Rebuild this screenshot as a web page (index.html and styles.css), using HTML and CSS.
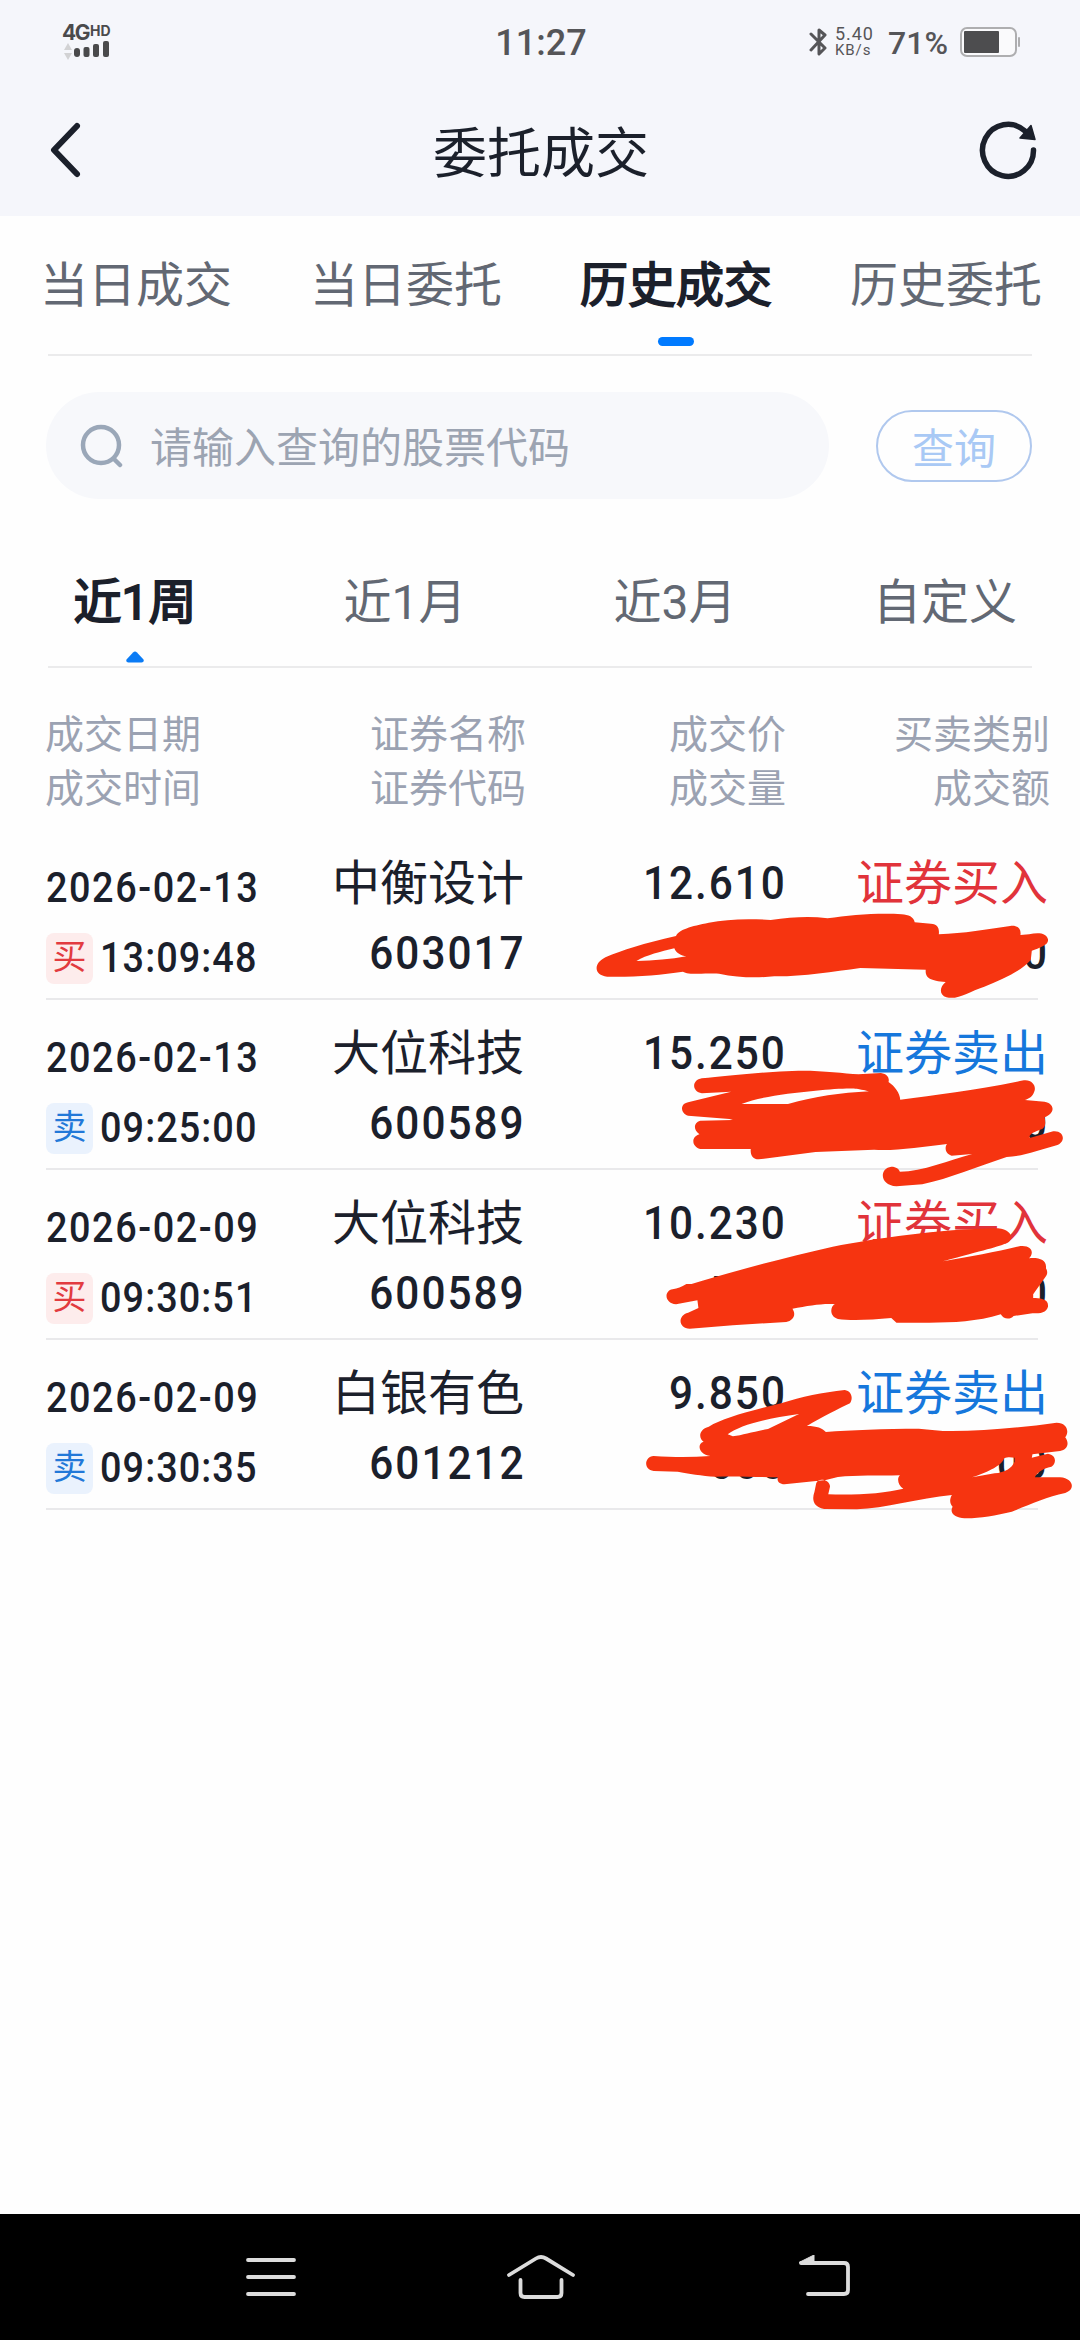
FILE: index.html
```html
<!DOCTYPE html>
<html lang="zh-CN">
<head>
<meta charset="utf-8">
<title>委托成交</title>
<link rel="stylesheet" href="styles.css">
</head>
<body>
<div class="screen">
  <header class="top">
    <div class="status">
      <div class="signal">
        <div class="net">4G<sup>HD</sup></div>
        <svg width="48" height="20" viewBox="0 0 48 20">
          <path d="M6 2l4 7H2zM6 19l4-7H2z" fill="#d2d2d4"/>
          <g fill="#4a4a4c"><rect x="12" y="7" width="6" height="9" rx="3"/><rect x="21.500" y="6" width="6" height="10" rx="2"/><rect x="31" y="3" width="6" height="13" rx="2"/><rect x="41" y="0" width="6" height="16" rx="2"/></g>
        </svg>
      </div>
      <div class="clock">11:27</div>
      <div class="status-right">
        <svg width="18" height="30" viewBox="0 0 18 30" fill="none" stroke="#555558" stroke-width="3" stroke-linejoin="round" stroke-linecap="round"><path d="M2 7l14 14-6 6V3l6 5L2 23"/></svg>
        <div class="speed"><span>5.40</span><span>KB/s</span></div>
        <div class="percent">71%</div>
        <svg class="battery" width="61" height="30" viewBox="0 0 61 30"><rect x="1" y="1" width="55" height="28" rx="6" fill="#fafafc" stroke="#aeaeb0" stroke-width="2"/><rect x="4" y="4" width="35" height="22" rx="1" fill="#4d4d4f"/><rect x="58" y="10" width="2" height="10" rx="1" fill="#aeaeb0"/></svg>
      </div>
    </div>
    <div class="titlebar">
      <svg width="40" height="60" viewBox="0 0 40 60" fill="none" stroke="#1b202b" stroke-width="6" stroke-linecap="round" stroke-linejoin="round"><path d="M31 6L8 30l23 24"/></svg>
      <h1>委托成交</h1>
      <svg width="60" height="60" viewBox="0 0 60 60"><path d="M55.500 30A25.500 26 0 1 1 47 11" fill="none" stroke="#1b202b" stroke-width="5.500" stroke-linecap="round"/><path d="M53 5.500L57 19.500 42 18z" fill="#1b202b" stroke="#1b202b" stroke-width="1.500" stroke-linejoin="round"/></svg>
    </div>
  </header>

  <nav class="tabs">
    <a>当日成交</a><a>当日委托</a><a class="on">历史成交</a><a>历史委托</a>
  </nav>

  <div class="search">
    <div class="field">
      <svg width="44" height="44" viewBox="0 0 44 44" fill="none" stroke="#9aa7b8" stroke-width="4.500" stroke-linecap="round"><circle cx="22" cy="21" r="18"/><path d="M35 35l6 6"/></svg>
      <span>请输入查询的股票代码</span>
    </div>
    <button class="query">查询</button>
  </div>

  <nav class="periods">
    <a class="on">近1周<svg width="18" height="12" viewBox="0 0 18 12"><path d="M7 1.500q2-2 4 0l6.500 7q1 3-2 3h-13q-3 0-2-3z" fill="#0a7bf5"/></svg></a><a>近1月</a><a>近3月</a><a>自定义</a>
  </nav>

  <div class="cols head">
    <div>成交日期<br>成交时间</div><div>证券名称<br>证券代码</div><div>成交价<br>成交量</div><div>买卖类别<br>成交额</div>
  </div>

  <main>
    <div class="cols row buy">
      <div><p class="date"><span>2026-02-13</span></p><p class="time"><i>买</i><span>13:09:48</span></p></div>
      <div><p>中衡设计</p><p class="num"><span>603017</span></p></div>
      <div><p class="num"><span>12.610</span></p></div>
      <div><p class="type">证券买入</p><p class="num"><span>0</span></p></div>
    </div>
    <div class="cols row sell">
      <div><p class="date"><span>2026-02-13</span></p><p class="time"><i>卖</i><span>09:25:00</span></p></div>
      <div><p>大位科技</p><p class="num"><span>600589</span></p></div>
      <div><p class="num"><span>15.250</span></p></div>
      <div><p class="type">证券卖出</p><p class="num"><span>0</span></p></div>
    </div>
    <div class="cols row buy">
      <div><p class="date"><span>2026-02-09</span></p><p class="time"><i>买</i><span>09:30:51</span></p></div>
      <div><p>大位科技</p><p class="num"><span>600589</span></p></div>
      <div><p class="num"><span>10.230</span></p><p class="num lead"><span>5</span></p></div>
      <div><p class="type">证券买入</p><p class="num"><span>0</span></p></div>
    </div>
    <div class="cols row sell">
      <div><p class="date"><span>2026-02-09</span></p><p class="time"><i>卖</i><span>09:30:35</span></p></div>
      <div><p>白银有色</p><p class="num"><span>601212</span></p></div>
      <div><p class="num"><span>9.850</span></p><p class="num"><span>600</span></p></div>
      <div><p class="type">证券卖出</p><p class="num"><span>00</span></p></div>
    </div>
  </main>

  <svg class="marks" width="540" height="720" viewBox="540 840 540 720" fill="#f63410" fill-rule="evenodd">
    <g transform="translate(540 680) scale(.3444 .3333)"><path d="M395 768C300 790 240 810 190 832C155 850 155 885 195 890C270 892 350 885 415 875C430 885 470 880 520 881C580 895 640 893 680 889C760 890 850 875 930 864L1120 869C1118 892 1130 902 1178 906C1160 920 1158 945 1180 952C1215 960 1245 935 1290 920C1350 895 1400 870 1425 840L1428 812C1450 803 1478 795 1475 778C1470 760 1450 757 1420 763L1395 765C1398 745 1385 735 1365 738C1300 748 1230 760 1158 763C1160 745 1155 732 1135 731L1088 727C1085 710 1070 705 1050 703C980 698 900 706 835 715C780 708 730 712 670 720C600 715 540 718 490 728C440 738 400 750 395 768ZM280 843C310 825 350 815 390 805C395 820 410 827 425 829C380 838 330 842 280 843Z"/></g>
    <g transform="translate(540 1000) scale(.3444 .3333)"><path d="M470 235C540 228 650 215 750 212C820 211 880 220 925 223L990 219C1010 222 1015 235 1012 246C1030 258 1045 280 1046 299C1150 285 1270 270 1405 241C1430 238 1442 260 1435 275C1430 290 1420 295 1408 300L1465 305C1495 310 1497 340 1465 352C1470 370 1468 385 1450 390C1425 400 1420 405 1422 414L1490 394C1520 390 1530 425 1500 436C1450 450 1400 470 1355 471C1270 500 1190 535 1110 553L1035 559C985 555 985 505 1020 500C1035 500 1042 507 1045 515C1110 515 1190 480 1255 462L1195 467C1175 460 1175 440 1182 432C1110 440 1020 455 970 449L800 456L635 478C618 478 610 465 612 447L465 447C440 440 438 410 463 403C445 390 445 368 465 362L560 360L550 357L430 347C408 340 405 312 430 307L555 275L470 280C440 275 440 240 470 235ZM585 312C640 290 720 280 800 272C850 266 900 264 920 266C940 270 950 272 957 274C870 278 800 290 720 312Z"/></g>
    <g transform="translate(540 1160) scale(.3444 .3333)">
      <path d="M385 388C400 385 410 382 425 372L440 372C560 335 700 295 850 260C980 235 1150 208 1330 205C1370 210 1375 235 1360 247C1330 262 1290 270 1170 304C1250 290 1330 275 1395 258C1430 255 1435 280 1420 295C1450 292 1472 300 1469 325C1475 335 1473 345 1468 350L1432 403L1432 414C1450 415 1478 415 1475 440C1470 458 1455 460 1430 460L1375 468C1365 480 1345 478 1338 463C1270 485 1200 488 1130 488L1035 488L1020 474C960 480 900 482 865 477C840 470 842 440 856 433C820 430 780 438 733 446C745 465 735 482 715 486L560 496L435 506C400 505 400 465 430 458L460 444L457 421L395 433C360 430 360 392 385 388Z"/>
      <path d="M490 800C530 775 600 755 700 730C760 710 820 697 885 690C905 693 910 715 900 730C870 745 820 770 775 798C805 798 820 805 830 816C900 810 1000 806 1100 806L1170 813C1270 815 1380 805 1500 788C1530 788 1538 815 1525 832C1538 850 1532 870 1510 873L1430 883L1428 893L1475 881C1500 885 1500 910 1485 920C1460 925 1440 940 1437 952L1510 952C1550 955 1555 990 1525 999C1470 1010 1420 1035 1370 1055C1320 1068 1260 1077 1225 1074C1198 1070 1190 1055 1198 1040C1188 1030 1190 1015 1196 1005C1100 1015 1000 1045 920 1048L825 1047C790 1040 790 1015 797 995L802 970C808 950 843 960 842 980L837 1003C920 1006 1000 1000 1055 986C1040 978 1035 955 1045 946C980 948 920 945 865 951L830 960L710 973C695 972 688 965 690 952C640 952 580 948 510 950C470 948 430 940 400 935L330 933C300 930 302 890 330 888C390 892 440 892 495 888C460 885 455 850 475 845C460 835 460 808 490 800ZM545 823C580 795 660 775 752 762L662 807C620 815 590 825 560 829ZM1255 952C1290 940 1340 920 1348 895C1360 890 1370 893 1378 893L1378 905C1370 925 1350 937 1320 940Z"/>
    </g>
  </svg>

  <footer class="sysnav">
    <svg width="54" height="44" viewBox="0 0 54 44"><path d="M4 5h46M4 22h46M4 39h46"/></svg>
    <svg width="72" height="46" viewBox="0 0 72 46"><path d="M4 21L31 4.500q5-3 10 0L68 21M15.500 26v13q0 4 4 4h33q4 0 4-4V26"/></svg>
    <svg width="54" height="44" viewBox="0 0 54 44"><path d="M3 8h43q4 0 4 4v23q0 4-4 4H10"/><path class="tip" d="M2 7L16 0v8H2z"/></svg>
  </footer>
</div>
</body>
</html>
```
FILE: styles.css
```css
* { box-sizing: border-box; margin: 0; padding: 0; }
body { background: #fefefe; font-family: Roboto, "Noto Sans CJK SC", sans-serif; color: #1b202b; }
svg { display: block; flex: none; }
.screen { position: relative; width: 1080px; height: 2340px; display: flex; flex-direction: column; overflow: hidden; }

.top { height: 216px; background: #f5f6fb; }
.status { height: 84px; display: grid; grid-template-columns: 1fr auto 1fr; align-items: center; padding: 0 60px 0 62px; color: #555558; }
.signal { color: #4a4a4c; }
.net { display: flex; align-items: flex-start; height: 17px; font: 700 21px/18px Inter, sans-serif; letter-spacing: -1.5px; }
.net sup { font-size: 14px; line-height: 13px; letter-spacing: 0; margin-left: 1px; }
.clock { font-size: 36px; font-weight: 500; line-height: 40px; padding-top: 2px; }
.status-right { display: flex; align-items: center; justify-content: flex-end; }
.speed { display: flex; flex-direction: column; margin-left: 8px; width: 53px; font-size: 18px; line-height: 17px; letter-spacing: .9px; }
.speed span + span { font-size: 15px; }
.percent { font-size: 32px; font-weight: 500; line-height: 36px; margin-right: 12px; padding-top: 2px; }
.battery { margin-right: -1px; }
.titlebar { height: 132px; display: flex; justify-content: space-between; padding: 36px 42px 0 46px; }
h1 { font-size: 54px; line-height: 60px; font-weight: 400; padding: 5px 0 0 18px; }

.tabs, .periods { display: grid; grid-template-columns: repeat(4, 270px); text-align: center; font-size: 48px; color: #626873; }
.tabs { height: 140px; line-height: 70px; padding: 35px 0 0 1px; background: linear-gradient(#ebebec, #ebebec) 48px 138px / 984px 2px no-repeat; }
.on { color: #1b202b; -webkit-text-stroke: 1.8px #1b202b; }
.tabs .on::after { content: ""; display: block; width: 36px; height: 9px; margin: 16px auto 0; border-radius: 5px; background: #007aff; }

.search { height: 180px; padding: 36px 48px 0 46px; display: flex; justify-content: space-between; }
.field { width: 783px; height: 107px; border-radius: 54px; background: #f7f8fb; display: flex; align-items: center; padding-left: 33px; font-size: 42px; color: #9ca4b2; }
.field span { margin-left: 27px; padding-top: 6px; line-height: 60px; }
.query { width: 156px; height: 72px; margin-top: 18px; border: 2px solid #b0c8ee; border-radius: 36px; background: none; font: 42px/66px "Noto Sans CJK SC", sans-serif; color: #a9c9f5; }

.periods { height: 132px; padding-top: 32px; line-height: 70px; background: linear-gradient(#ebebec, #ebebec) 48px 130px / 984px 2px no-repeat; }
.periods svg { margin: 13px auto 0; }

.cols { display: grid; grid-template-columns: 240px 240px 260px 262px; margin-left: 46px; width: 1002px; }
.cols > div + div { text-align: right; }
.head { height: 162px; padding-top: 40px; font-size: 39px; line-height: 54px; color: #9ba2b2; }
.head > div:first-child { margin-left: -1px; }
.head > div:nth-child(4) { margin-right: -2px; }
.row { height: 170px; padding-top: 19px; font-size: 48px; background: linear-gradient(#e9e9eb, #e9e9eb) 0 168px / 992px 2px no-repeat; }
.row p { height: 70px; line-height: 70px; }
.row > div:nth-child(2) { padding-right: 2px; }
.num span, .date span, .time span { display: inline-block; font-family: Roboto, sans-serif; font-weight: 500; transform-origin: 100% 50%; transform: scaleX(.9); }
.num span { font-size: 47px; letter-spacing: 2.200px; }
.row .num { margin-right: -1px; line-height: 68px; }
.date span, .time span { font-size: 42px; letter-spacing: 1.200px; transform-origin: 0 50%; }
.date span { letter-spacing: 1.750px; }
.row .date { padding-top: 2px; height: 74px; }
.row .time { display: flex; align-items: center; }
.row .time i { width: 47px; height: 51px; margin-right: 7px; border-radius: 8px; font-style: normal; font-size: 34px; line-height: 49px; text-align: center; }
.row .lead { padding-right: 52px; }
.buy i { background: #fdecec; color: #e23b40; }
.sell i { background: #eaf2fd; color: #2278d8; }
.buy .type { color: #e1333a; }
.sell .type { color: #1677dc; }

.marks { position: absolute; left: 540px; top: 840px; }

.sysnav { margin-top: auto; height: 126px; background: #000; display: grid; grid-template-columns: 261px 1fr auto; align-items: center; padding: 0 228px 0 244px; }
.sysnav path { fill: none; stroke: #dcdcdc; stroke-width: 3.800px; stroke-linecap: round; stroke-linejoin: round; }
.sysnav .tip { fill: #dcdcdc; stroke-width: 1px; }
```
